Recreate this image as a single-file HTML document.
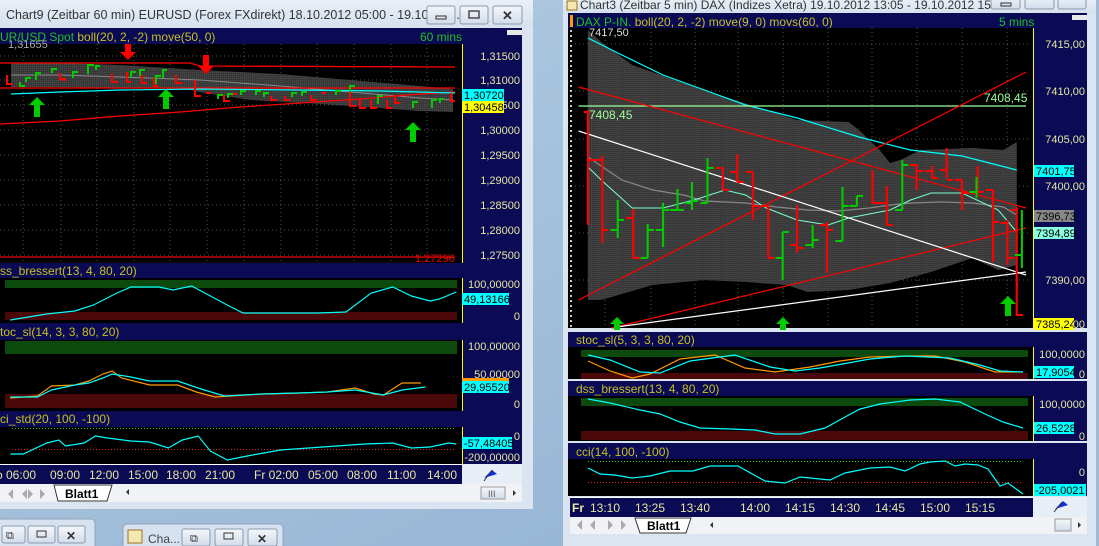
<!DOCTYPE html>
<html><head><meta charset="utf-8"><style>
html,body{margin:0;padding:0;width:1099px;height:546px;overflow:hidden;background:#9fbad6}
svg{display:block}
text{font-family:"Liberation Sans",sans-serif}
</style></head><body>
<svg width="1099" height="546" viewBox="0 0 1099 546" xmlns="http://www.w3.org/2000/svg">
<defs>
<linearGradient id="desk" x1="0" y1="0" x2="1" y2="1"><stop offset="0" stop-color="#b4cce3"/><stop offset="1" stop-color="#8fb0d0"/></linearGradient>
<linearGradient id="tb" x1="0" y1="0" x2="0" y2="1"><stop offset="0" stop-color="#e9eff7"/><stop offset="1" stop-color="#d6e1ee"/></linearGradient>
<linearGradient id="btn" x1="0" y1="0" x2="0" y2="1"><stop offset="0" stop-color="#f4f7fb"/><stop offset="1" stop-color="#d2dcea"/></linearGradient>
<pattern id="gdot" width="2" height="2" patternUnits="userSpaceOnUse"><rect width="2" height="2" fill="#383838"/><rect width="1" height="1" fill="#4a4a4a"/></pattern>
</defs>
<rect width="1099" height="546" fill="url(#desk)"/>

<!-- ============ LEFT WINDOW ============ -->
<rect x="0" y="0" width="533" height="509" fill="#dbe5f1"/>
<rect x="0" y="0" width="533" height="27" fill="url(#tb)"/>
<text x="6" y="19" font-size="12.5" fill="#333">Chart9 (Zeitbar 60 min)  EURUSD (Forex FXdirekt) 18.10.2012 05:00 - 19.10.201...</text>
<g stroke="#8a99ad" fill="url(#btn)"><rect x="427" y="6" width="28" height="18" rx="2"/><rect x="460" y="6" width="28" height="18" rx="2"/><rect x="493" y="6" width="29" height="18" rx="2"/></g>
<rect x="436" y="16" width="10" height="3" fill="none" stroke="#333"/>
<rect x="469" y="11" width="10" height="7" fill="none" stroke="#333" stroke-width="1.3"/>
<text x="502" y="20" font-size="13" fill="#333" font-weight="bold">✕</text>

<rect x="0" y="28" width="522" height="16" fill="#0a0a55"/>
<text x="0" y="41" font-size="12"><tspan fill="#22c022">UR/USD Spot </tspan><tspan fill="#c8c020">boll(20, 2, -2) move(50, 0)</tspan></text>
<text x="420" y="41" font-size="12" fill="#22c022">60 mins</text>
<rect x="507" y="30" width="15" height="5" fill="#e8e8e8"/>
<rect x="0" y="44" width="462" height="219" fill="#000"/>
<g stroke="#4a5a4a" stroke-dasharray="1,3" stroke-width="1">
<path d="M23 44V263M61 44V263M97 44V263M134 44V263M170 44V263M207 44V263M244 44V263M281 44V263M317 44V263M354 44V263M391 44V263M427 44V263"/>
<path d="M0 56H455M0 80H455M0 105H455M0 130H455M0 155H455M0 180H455M0 205H455M0 230H455M0 255H455"/>
</g>
<polygon points="11,63 60,63 120,65 200,70 280,74 350,80 420,86 453,89 453,112 420,111 380,108 320,104 250,100 205,93 180,88 120,88 60,87 11,87" fill="url(#gdot)"/>
<polyline points="11,75 60,75 120,77 200,80 280,86 350,92 420,98 453,100" fill="none" stroke="#888" stroke-width="1"/>
<polyline points="0,63 190,63 200,66 455,67" fill="none" stroke="#f00" stroke-width="1.3"/>
<line x1="0" y1="88" x2="455" y2="88" stroke="#f00" stroke-width="1.3"/>
<polyline points="0,124 60,121 120,116 180,112 240,107 300,103 360,99 420,94 455,92" fill="none" stroke="#f00" stroke-width="1.2"/>
<polyline points="11,94 60,92 120,90 200,89 300,90 380,91 455,93" fill="none" stroke="#0ff" stroke-width="1.2"/>
<g stroke-width="2" fill="none">
<path stroke="#f00" d="M7 75v9h5M60 73v6h6M62 80h4M112 74v8h6M127 72v10h4M142 75v8h5M154 78v8h4M176 75v8h6M195 80v16h6M206 93h5M224 95v6h6M232 94h5M271 96v4h6M285 96v4h5M311 95v5h6M322 93h4M350 92v14h6M360 98v10h6M371 100v8h6M387 100v8h5M395 95v8h5M451 93v8h4"/>
<path stroke="#0c0" d="M20 82v4h5M26 82v-4h5M36 80v-7h5M52 73v-4h5M73 78v-6h5M88 74v-9h6M96 70v-4h4M131 78v-6h5M140 76v-6h5M156 84v-8h5M163 78v-8h4M218 99v-4h5M228 98v-4h5M241 95v-4h5M256 95v-4h5M264 97v-4h5M292 97v-4h5M302 96v-4h5M336 95v-4h5M350 92v-6h5M378 104v-8h5M413 108v-6h5M432 108v-8h5M440 103v-4h4"/>
</g>
<g fill="#f00"><path d="M125 44h6v8h5l-8 8-8-8h5z"/><path d="M203 55h6v11h5l-8 8-8-8h5z"/></g>
<g fill="#0c0"><path d="M37 97l8 8h-5v12h-6v-12h-5z"/><path d="M166 89l8 8h-5v12h-6v-12h-5z"/><path d="M413 122l8 8h-5v12h-6v-12h-5z"/></g>
<text x="8" y="48" font-size="11" fill="#aaa">1,31655</text>
<line x1="0" y1="257" x2="455" y2="257" stroke="#e00" stroke-width="1.2"/>
<text x="415" y="262" font-size="11" fill="#e00">1,27296</text>
<rect x="462" y="44" width="60" height="219" fill="#0a0a55"/>
<line x1="462.5" y1="44" x2="462.5" y2="263" stroke="#ff0"/>
<g font-size="11" fill="#e6e6a0" text-anchor="end">
<text x="520" y="60">1,31500</text><text x="520" y="84">1,31000</text><text x="520" y="109">1,30500</text><text x="520" y="134">1,30000</text><text x="520" y="159">1,29500</text><text x="520" y="184">1,29000</text><text x="520" y="209">1,28500</text><text x="520" y="234">1,28000</text><text x="520" y="259">1,27500</text>
</g>
<rect x="462" y="89" width="42" height="12" fill="#0ff"/><text x="464" y="99" font-size="11" fill="#000">1,30720</text>
<rect x="462" y="101" width="42" height="12" fill="#ff0"/><text x="464" y="111" font-size="11" fill="#000">1,30458</text>

<rect x="0" y="263" width="522" height="15" fill="#0a0a55"/>
<text x="0" y="275" font-size="12" fill="#c8c020">ss_bressert(13, 4, 80, 20)</text>
<rect x="0" y="278" width="462" height="45" fill="#000"/>
<rect x="5" y="280" width="452" height="8" fill="#0d4a0d"/>
<rect x="5" y="312" width="452" height="8" fill="#4a0808"/>
<polyline points="11,320 50,314 80,311 100,305 125,293 140,287 170,287 185,290 205,286 245,306 260,313 300,313 340,313 370,312 397,293 420,287 440,296 460,301 470,299 488,292" transform="scale(0.935,1)" fill="none" stroke="#0ff" stroke-width="1.2"/>
<rect x="462" y="278" width="60" height="45" fill="#0a0a55"/><line x1="462.5" y1="278" x2="462.5" y2="323" stroke="#ff0"/>
<text x="520" y="288" font-size="11" fill="#e6e6a0" text-anchor="end">100,00000</text>
<text x="520" y="320" font-size="11" fill="#e6e6a0" text-anchor="end">0</text>
<rect x="462" y="293" width="47" height="12" fill="#0ff"/><text x="464" y="303" font-size="11" fill="#000">49,13166</text>

<rect x="0" y="323" width="522" height="17" fill="#0a0a55"/>
<text x="0" y="336" font-size="12" fill="#c8c020">toc_sl(14, 3, 3, 80, 20)</text>
<rect x="0" y="340" width="462" height="71" fill="#000"/>
<rect x="5" y="341" width="452" height="13" fill="#0d4a0d"/>
<rect x="5" y="394" width="452" height="14" fill="#4a0808"/>
<g transform="scale(0.935,1)" fill="none" stroke-width="1.2">
<polyline stroke="#f90" points="11,398 40,396 55,386 80,385 95,381 110,374 120,371 130,378 160,385 190,385 210,392 230,397 280,394 320,393 350,392 380,388 400,394 410,395 430,383 450,383"/>
<polyline stroke="#0ff" points="11,397 40,397 55,390 80,385 95,383 110,378 120,374 140,377 160,381 190,381 215,389 240,396 280,394 320,393 350,392 380,390 410,395 430,390 455,387"/>
</g>
<rect x="462" y="340" width="60" height="71" fill="#0a0a55"/><line x1="462.5" y1="340" x2="462.5" y2="411" stroke="#ff0"/>
<text x="520" y="350" font-size="11" fill="#e6e6a0" text-anchor="end">100,00000</text>
<text x="520" y="378" font-size="11" fill="#e6e6a0" text-anchor="end">50,00000</text>
<text x="520" y="408" font-size="11" fill="#e6e6a0" text-anchor="end">0</text>
<rect x="462" y="378" width="47" height="4" fill="#f90"/>
<rect x="462" y="381" width="47" height="12" fill="#0ff"/><text x="464" y="391" font-size="11" fill="#000">29,95520</text>

<rect x="0" y="411" width="522" height="16" fill="#0a0a55"/>
<text x="0" y="423" font-size="12" fill="#c8c020">ci_std(20, 100, -100)</text>
<rect x="0" y="427" width="462" height="37" fill="#000"/>
<line x1="12" y1="428.5" x2="455" y2="428.5" stroke="#2c2" stroke-dasharray="1,2"/>
<line x1="12" y1="449.5" x2="455" y2="449.5" stroke="#e22" stroke-dasharray="1,2"/>
<polyline transform="scale(0.935,1)" points="11,454 25,454 50,443 63,440 70,446 90,443 102,436 115,438 140,441 160,442 180,448 195,440 212,436 225,451 243,460 270,455 300,450 330,448 360,446 390,444 420,443 440,448 460,447 480,443 488,444" fill="none" stroke="#0ff" stroke-width="1.2"/>
<rect x="462" y="427" width="60" height="37" fill="#0a0a55"/><line x1="462.5" y1="427" x2="462.5" y2="464" stroke="#ff0"/>
<text x="520" y="440" font-size="11" fill="#e6e6a0" text-anchor="end">0</text>
<text x="520" y="461" font-size="11" fill="#e6e6a0" text-anchor="end">-200,00000</text>
<rect x="462" y="437" width="50" height="12" fill="#0ff"/><text x="464" y="447" font-size="11" fill="#000">-57,48405</text>

<rect x="0" y="464" width="462" height="20" fill="#0a0a55"/>
<line x1="0" y1="464.5" x2="462" y2="464.5" stroke="#fff"/>
<g font-size="12" fill="#e6e6a0">
<text x="-4" y="479">o 06:00</text><text x="50" y="479">09:00</text><text x="89" y="479">12:00</text><text x="128" y="479">15:00</text><text x="166" y="479">18:00</text><text x="205" y="479">21:00</text><text x="254" y="479">Fr 02:00</text><text x="308" y="479">05:00</text><text x="347" y="479">08:00</text><text x="387" y="479">11:00</text><text x="427" y="479">14:00</text>
</g>
<rect x="462" y="464" width="60" height="20" fill="#e8eef6"/>
<path d="M484 478l8-8 5 4z" fill="#1030e0"/><line x1="484" y1="481" x2="492" y2="470" stroke="#333"/>
<rect x="0" y="484" width="522" height="18" fill="#f0f2f6"/>
<g fill="#aaa"><path d="M8 494l5-5v10zM22 494l5-5v10zM28 489l5 5-5 5zM40 489l5 5-5 5z"/></g>
<path d="M54 485h58l-5 16H58z" fill="#fff" stroke="#333"/>
<text x="65" y="498" font-size="12" font-weight="bold" fill="#000">Blatt1</text>
<path d="M126 492l3-3v6z" fill="#333"/>
<rect x="481" y="487" width="24" height="12" fill="url(#btn)" stroke="#999"/>
<text x="488" y="497" font-size="9" fill="#555">III</text>
<path d="M513 490l3 3-3 3z" fill="#333"/>

<rect x="-2" y="519" width="97" height="30" rx="4" fill="#d6e2ef" stroke="#8fa4bb"/>
<g stroke="#8a99ad" fill="url(#btn)"><rect x="2" y="526" width="23" height="17" rx="2"/><rect x="28" y="526" width="27" height="17" rx="2"/><rect x="58" y="526" width="27" height="17" rx="2"/></g>
<text x="6" y="539" font-size="11" fill="#333">⧉</text><rect x="37" y="531" width="9" height="6" fill="none" stroke="#333"/><text x="66" y="540" font-size="12" fill="#333" font-weight="bold">✕</text>
<rect x="123" y="524" width="160" height="26" rx="4" fill="#d6e2ef" stroke="#8fa4bb"/>
<rect x="128" y="530" width="14" height="13" fill="#f5e7b0" stroke="#a07020"/>
<text x="148" y="543" font-size="12" fill="#444">Cha...</text>
<g stroke="#8a99ad" fill="url(#btn)"><rect x="182" y="529" width="28" height="17" rx="2"/><rect x="215" y="529" width="28" height="17" rx="2"/><rect x="248" y="529" width="29" height="17" rx="2"/></g>
<text x="190" y="542" font-size="11" fill="#333">⧉</text><rect x="224" y="533" width="9" height="6" fill="none" stroke="#333"/><text x="257" y="543" font-size="12" fill="#333" font-weight="bold">✕</text>

<!-- ============ RIGHT WINDOW ============ -->
<rect x="563" y="0" width="534" height="546" fill="#dbe5f1"/>
<rect x="563" y="0" width="534" height="13" fill="url(#tb)"/>
<rect x="567" y="1" width="10" height="9" fill="#f5e7b0" stroke="#a07020"/>
<text x="580" y="9" font-size="12" fill="#333">Chart3 (Zeitbar 5 min)  DAX (Indizes Xetra) 19.10.2012 13:05 - 19.10.2012 15...</text>
<g stroke="#8a99ad" fill="url(#btn)"><rect x="991" y="-6" width="29" height="15" rx="2"/><rect x="1025" y="-6" width="29" height="15" rx="2"/><rect x="1058" y="-6" width="28" height="15" rx="2"/></g>
<rect x="1001" y="3" width="10" height="3" fill="none" stroke="#333"/>
<rect x="568" y="13" width="519" height="15" fill="#0a0a55"/>
<rect x="570" y="15" width="3" height="12" fill="#f90"/>
<text x="576" y="26" font-size="12"><tspan fill="#22c022">DAX P-IN. </tspan><tspan fill="#c8c020">boll(20, 2, -2) move(9, 0) movs(60, 0)</tspan></text>
<text x="999" y="26" font-size="12" fill="#22c022">5 mins</text>
<rect x="1072" y="15" width="15" height="5" fill="#e8e8e8"/>

<rect x="568" y="28" width="465" height="300" fill="#000"/>
<g stroke="#4a5a4a" stroke-dasharray="1,3">
<path d="M605 28V328M651 28V328M695 28V328M738 28V328M783 28V328M828 28V328M872 28V328M917 28V328M962 28V328M1007 28V328"/>
<path d="M575 44H1030M575 91H1030M575 139H1030M575 186H1030M575 233H1030M575 280H1030"/>
</g>
<g stroke="#ccc" stroke-width="2" stroke-dasharray="2,3"><path d="M571 30V327"/></g>
<g transform="translate(560,0) scale(1.031,1) translate(-560,0)">
<polygon points="587,30 600,42 630,65 700,90 790,120 840,122 850,130 870,150 880,163 890,160 910,150 960,148 990,150 1003,142 1003,265 985,270 960,258 920,272 880,283 840,290 800,292 780,285 740,282 700,280 650,285 600,300 587,300" fill="url(#gdot)"/>
<polyline points="587,38 620,55 660,75 700,90 740,105 790,118 850,137 900,150 950,156 1003,170" fill="none" stroke="#0ff" stroke-width="1.2"/>
<line x1="578" y1="106" x2="1012" y2="106" stroke="#9f9" stroke-width="1.2"/>
<polyline points="587,157 620,180 650,190 680,195 700,201 740,203 770,207 800,210 830,211 860,208 880,205 900,203 930,202 960,203 990,207 1003,215" fill="none" stroke="#888" stroke-width="1.2"/>
<polyline points="587,167 600,180 630,208 660,208 690,200 720,190 740,195 760,208 790,220 820,225 840,218 860,214 880,210 900,200 920,193 950,193 985,210 1003,232" fill="none" stroke="#7fc" stroke-width="1"/>
<line x1="578" y1="87" x2="1012" y2="208" stroke="#f00" stroke-width="1.2"/>
<line x1="578" y1="300" x2="1012" y2="72" stroke="#f00" stroke-width="1.2"/>
<line x1="610" y1="328" x2="1012" y2="228" stroke="#f00" stroke-width="1.2"/>
<line x1="578" y1="131" x2="1012" y2="275" stroke="#fff" stroke-width="1.2"/>
<line x1="615" y1="327" x2="1012" y2="272" stroke="#fff" stroke-width="1.2"/>
<g stroke-width="2" fill="none">
<path stroke="#f00" d="M587 110v115M583 112h4M587 160h7M601 156v87M594 160h7M601 230h6M631 209v49M624 218h7M631 258h7M718 168v22M711 168h7M718 190h6M732 154v28M725 172h7M732 182h6M747 172v48M740 172h7M747 206h6M762 205v53M755 206h7M762 258h6M790 205v48M783 245h7M790 248h6M819 222v51M812 225h7M819 230h6M863 170v33M863 203h7M877 186v39M870 203h7M877 225h6M906 165v25M899 165h7M906 171h6M921 166v12M914 171h7M921 178h6M935 148v30M928 170h7M935 180h6M950 180v30M943 180h7M950 193h6M965 166v26M965 192h6M980 190v72M973 190h7M980 222h6M994 220v45M987 223h7M994 258h6M1003 207v108h6M997 210h6"/>
<path stroke="#0c0" d="M616 200v38M609 230h7M616 220h6M645 224v34M638 258h7M645 230h6M660 203v44M653 230h7M660 210h6M674 189v21M667 210h7M674 210h6M688 182v28M681 203h7M688 201h6M703 158v45M696 203h7M703 168h6M776 232v48M769 258h7M776 232h6M805 225v23M798 245h7M805 240h6M834 187v54M827 241h7M834 206h6M848 196v10M841 206h7M848 196h6M892 160v50M885 210h7M892 165h6M964 177v21M957 192h7M1008 210v58M1001 255h7"/>
</g>
</g>
<g fill="#0c0"><path d="M617 317l7 7h-4v6h-6v-6h-4z"/><path d="M783 317l7 7h-4v6h-6v-6h-4z"/><path d="M1008 296l8 8h-5v12h-6v-12h-5z"/></g>
<text x="589" y="36" font-size="11" fill="#ddd">7417,50</text>
<text x="589" y="119" font-size="12" fill="#9f9">7408,45</text>
<text x="984" y="102" font-size="12" fill="#9f9">7408,45</text>
<rect x="1033" y="28" width="54" height="300" fill="#0a0a55"/>
<line x1="1033.5" y1="28" x2="1033.5" y2="328" stroke="#ff0"/>
<g font-size="11" fill="#e6e6a0" text-anchor="end">
<text x="1085" y="48">7415,00</text><text x="1085" y="95">7410,00</text><text x="1085" y="143">7405,00</text><text x="1085" y="190">7400,00</text><text x="1085" y="284">7390,00</text>
</g>
<rect x="1034" y="165" width="40" height="12" fill="#0ff"/><text x="1036" y="175" font-size="11" fill="#000">7401,75</text>
<rect x="1034" y="210" width="40" height="12" fill="#888"/><text x="1036" y="220" font-size="11" fill="#000">7396,73</text>
<rect x="1034" y="227" width="40" height="12" fill="#8fd"/><text x="1036" y="237" font-size="11" fill="#000">7394,89</text>
<rect x="1034" y="318" width="40" height="12" fill="#ff0"/><text x="1036" y="328" font-size="11" fill="#000">7385,24</text>
<text x="1085" y="328" font-size="11" fill="#e6e6a0" text-anchor="end">00</text>

<rect x="568" y="332" width="519" height="15" fill="#0a0a55"/>
<text x="576" y="344" font-size="12" fill="#c8c020">stoc_sl(5, 3, 3, 80, 20)</text>
<rect x="568" y="347" width="465" height="32" fill="#000"/>
<rect x="581" y="350" width="447" height="7" fill="#0d4a0d"/>
<rect x="581" y="373" width="447" height="6" fill="#4a0808"/>
<polyline points="588,361 610,371 632,378 650,374 680,359 715,355 745,368 775,372 810,367 840,361 870,357 910,356 935,356 965,362 995,372 1023,372" fill="none" stroke="#f90" stroke-width="1.2"/>
<polyline points="588,355 610,360 640,372 660,373 690,361 735,355 770,367 795,371 820,368 870,359 905,356 950,358 980,365 1000,371 1023,372" fill="none" stroke="#0ff" stroke-width="1.2"/>
<rect x="1033" y="347" width="54" height="32" fill="#0a0a55"/><line x1="1033.5" y1="347" x2="1033.5" y2="379" stroke="#ff0"/>
<text x="1085" y="358" font-size="11" fill="#e6e6a0" text-anchor="end">100,0000</text>
<text x="1085" y="378" font-size="11" fill="#e6e6a0" text-anchor="end">0</text>
<rect x="1034" y="366" width="40" height="12" fill="#0ff"/><text x="1036" y="376" font-size="11" fill="#000">17,9054</text>

<rect x="568" y="381" width="519" height="15" fill="#0a0a55"/>
<text x="576" y="393" font-size="12" fill="#c8c020">dss_bressert(13, 4, 80, 20)</text>
<rect x="568" y="396" width="465" height="45" fill="#000"/>
<rect x="581" y="398" width="447" height="8" fill="#0d4a0d"/>
<rect x="581" y="431" width="447" height="9" fill="#4a0808"/>
<polyline points="588,399 610,403 640,410 660,414 680,422 700,428 730,429 755,430 775,434 800,434 825,428 845,417 860,409 880,404 910,400 935,399 960,402 985,414 1003,422 1023,428" fill="none" stroke="#0ff" stroke-width="1.2"/>
<rect x="1033" y="396" width="54" height="45" fill="#0a0a55"/><line x1="1033.5" y1="396" x2="1033.5" y2="441" stroke="#ff0"/>
<text x="1085" y="408" font-size="11" fill="#e6e6a0" text-anchor="end">100,0000</text>
<text x="1085" y="440" font-size="11" fill="#e6e6a0" text-anchor="end">0</text>
<rect x="1034" y="422" width="40" height="12" fill="#0ff"/><text x="1036" y="432" font-size="11" fill="#000">26,5228</text>

<rect x="568" y="443" width="519" height="16" fill="#0a0a55"/>
<text x="576" y="456" font-size="12" fill="#c8c020">cci(14, 100, -100)</text>
<rect x="568" y="459" width="465" height="37" fill="#000"/>
<line x1="588" y1="461.5" x2="1023" y2="461.5" stroke="#2c2" stroke-dasharray="1,2"/>
<line x1="588" y1="482.5" x2="1023" y2="482.5" stroke="#e22" stroke-dasharray="1,2"/>
<polyline points="588,468 600,474 615,475 632,478 650,476 670,471 693,471 710,466 738,466 765,481 785,483 800,477 820,479 830,480 845,473 870,468 890,467 905,471 920,464 930,462 945,461 955,466 965,464 978,465 988,469 1000,486 1008,483 1023,494" fill="none" stroke="#0ff" stroke-width="1.2"/>
<rect x="1033" y="459" width="54" height="37" fill="#0a0a55"/><line x1="1033.5" y1="459" x2="1033.5" y2="496" stroke="#ff0"/>
<text x="1085" y="476" font-size="11" fill="#e6e6a0" text-anchor="end">0</text>
<rect x="1034" y="484" width="52" height="12" fill="#0ff"/><text x="1035" y="494" font-size="11" fill="#000">-205,0021</text>

<rect x="570" y="497" width="463" height="20" fill="#0a0a55"/>
<line x1="570" y1="497.5" x2="1033" y2="497.5" stroke="#fff"/>
<g font-size="12" fill="#e6e6a0">
<text x="572" y="512" font-weight="bold">Fr</text><text x="590" y="512">13:10</text><text x="635" y="512">13:25</text><text x="680" y="512">13:40</text><text x="740" y="512">14:00</text><text x="785" y="512">14:15</text><text x="830" y="512">14:30</text><text x="875" y="512">14:45</text><text x="920" y="512">15:00</text><text x="965" y="512">15:15</text>
</g>
<rect x="1033" y="497" width="54" height="20" fill="#e8eef6"/>
<path d="M1055 509l8-8 5 4z" fill="#1030e0"/><line x1="1054" y1="512" x2="1062" y2="502" stroke="#333"/>
<rect x="570" y="517" width="517" height="17" fill="#f0f2f6"/>
<g fill="#aaa"><path d="M577 525l5-5v10zM590 525l5-5v10zM608 520l5 5-5 5zM621 520l5 5-5 5z"/></g>
<path d="M635 518h56l-5 15h-46z" fill="#fff" stroke="#333"/>
<text x="647" y="530" font-size="12" font-weight="bold" fill="#000">Blatt1</text>
<path d="M710 525l3-3v6z" fill="#333"/>
<rect x="1055" y="519" width="16" height="12" fill="url(#btn)" stroke="#999"/>
<path d="M1078 522l3 3-3 3z" fill="#333"/>
<rect x="563" y="536" width="534" height="10" fill="#dbe5f1"/>
<rect x="1096" y="0" width="3" height="546" fill="#9fbad6"/>
</svg>
</body></html>
